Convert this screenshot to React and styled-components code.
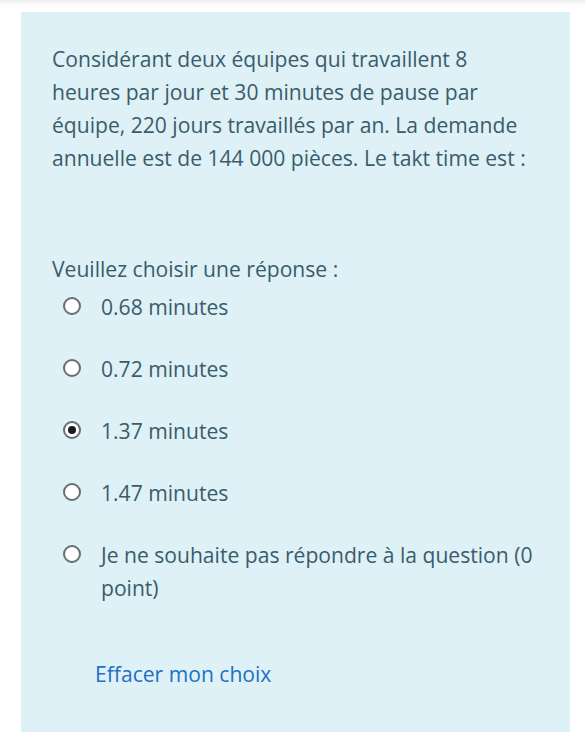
import React from 'react';
import styled, { createGlobalStyle } from 'styled-components';

const GlobalStyle = createGlobalStyle`
  html, body {
    margin: 0;
    padding: 0;
    background: #ffffff;
  }
  body {
    font-family: "Open Sans", "Noto Sans", Arial, sans-serif;
    -webkit-font-smoothing: antialiased;
  }
`;

const Page = styled.div`
  width: 585px;
  height: 747px;
  box-sizing: border-box;
  padding: 12px 15px 0 21px;
  background: linear-gradient(to bottom, #ececec 0px, #fafafa 4px, #ffffff 8px);
`;

const Formulation = styled.div`
  box-sizing: border-box;
  width: 549px;
  height: 720px;
  background: #def1f7;
  color: #3a5c6a;
  padding: 30px 26px 0 31px;
  font-size: 21.1px;
  line-height: 33px;
`;

const QuestionText = styled.p`
  max-width: 478px;
  margin: 0 0 78px 0;
`;

const Prompt = styled.div`
  margin-bottom: 5px;
`;

const Answers = styled.div`
  display: flex;
  flex-direction: column;
  gap: 29px;
  padding-left: 11px;
`;

const Option = styled.label`
  display: flex;
  align-items: flex-start;
  gap: 20px;
`;

const Radio = styled.span`
  flex: 0 0 auto;
  box-sizing: border-box;
  width: 18px;
  height: 18px;
  margin-top: 7px;
  border-radius: 50%;
  border: 2px solid #666d73;
  background: #ffffff;
  display: flex;
  align-items: center;
  justify-content: center;

  &::after {
    content: '';
    width: 8px;
    height: 8px;
    border-radius: 50%;
    background: ${(p) => (p.checked ? '#1c1c1c' : 'transparent')};
  }
`;

const OptionLabel = styled.span`
  flex: 1;
`;

const ClearLink = styled.a`
  display: inline-block;
  margin: 53px 0 0 43px;
  color: #2270c4;
  text-decoration: none;
`;

const options = [
  { label: '0.68 minutes' },
  { label: '0.72 minutes' },
  { label: '1.37 minutes', checked: true },
  { label: '1.47 minutes' },
  { label: 'Je ne souhaite pas répondre à la question (0 point)' },
];

export default function App() {
  return (
    <>
      <GlobalStyle />
      <Page>
        <Formulation>
          <QuestionText>
            Considérant deux équipes qui travaillent 8 heures par jour et 30 minutes de pause par
            équipe, 220 jours travaillés par an. La demande annuelle est de 144 000 pièces. Le takt
            time est{'\u00a0'}:
          </QuestionText>
          <Prompt>Veuillez choisir une réponse{'\u00a0'}:</Prompt>
          <Answers>
            {options.map((o) => (
              <Option key={o.label}>
                <Radio checked={o.checked} />
                <OptionLabel>{o.label}</OptionLabel>
              </Option>
            ))}
          </Answers>
          <ClearLink href="#">Effacer mon choix</ClearLink>
        </Formulation>
      </Page>
    </>
  );
}
